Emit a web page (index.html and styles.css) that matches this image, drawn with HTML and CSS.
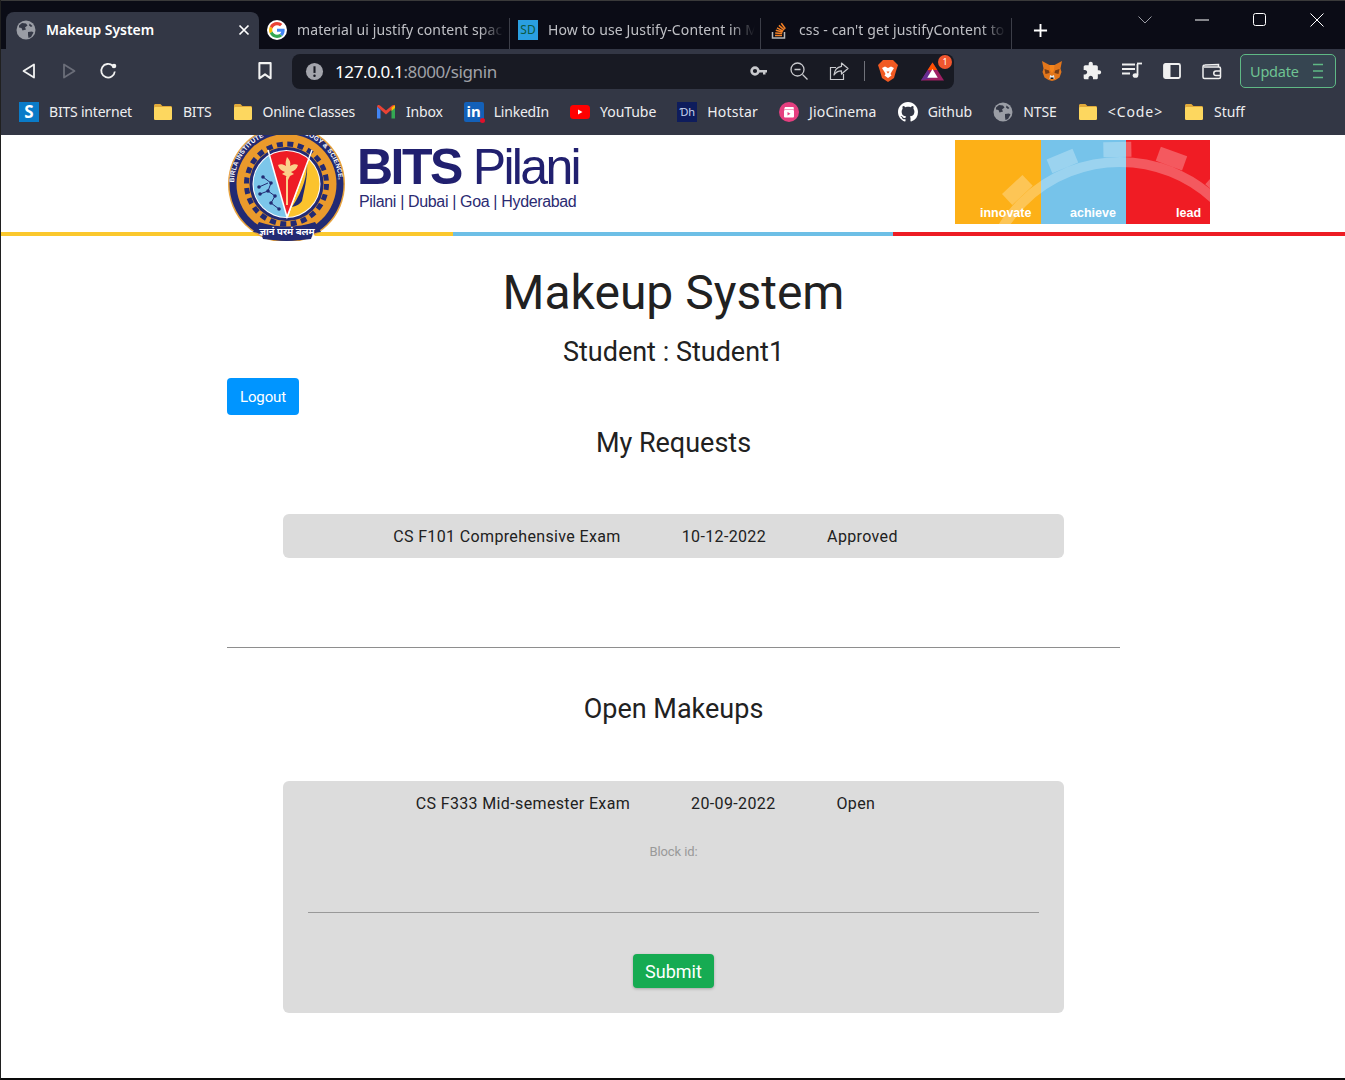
FILE: index.html
```html
<!DOCTYPE html>
<html lang="en">
<head>
<meta charset="utf-8">
<title>Makeup System</title>
<link rel="stylesheet" href="styles.css">
</head>
<body>
<svg class="defs" width="0" height="0" aria-hidden="true">
  <defs>
    <symbol id="globe" viewBox="0 0 20 20">
      <circle cx="10" cy="10" r="9.5" fill="#9a9da5"/>
      <path d="M3 5.500l3-2.500 4 .5 1.500 2-2.500 2 1 2-3.500 1-1-2.500L3 7.500zM12 12l4-.5 1.500 1-2.500 4.500-2.500 1-.5-3zM13.500 3.500l3 2.500-1.500 1-2-1.500z" fill="#343846"/>
    </symbol>
    <symbol id="folder" viewBox="0 0 20 20">
      <path d="M1 3.500C1 2.700 1.600 2 2.400 2h5l2 2h8.200c.8 0 1.400.6 1.400 1.400v11.200c0 .8-.6 1.400-1.400 1.400H2.400C1.600 18 1 17.400 1 16.600z" fill="#e0a93a"/>
      <path d="M1 6.500C1 5.700 1.600 5 2.400 5h15.200c.8 0 1.400.7 1.400 1.500v10.100c0 .8-.6 1.400-1.400 1.400H2.400C1.600 18 1 17.400 1 16.600z" fill="#fdd75f"/>
    </symbol>
  </defs>
</svg>
<div class="window">
  <div class="tabstrip">
    <div class="tab tab-active">
      <svg class="fav"><use href="#globe"/></svg>
      <span class="tab-title-active">Makeup System</span>
      <svg class="tab-close" viewBox="0 0 12 12"><path d="M1.500 1.500l9 9M10.500 1.500l-9 9" stroke="#fff" stroke-width="1.700"/></svg>
    </div>
    <div class="tab">
      <svg class="fav" viewBox="-6 -6 60 60">
        <circle cx="24" cy="24" r="30" fill="#fff"/>
        <path fill="#EA4335" d="M24 9.500c3.540 0 6.710 1.220 9.210 3.600l6.850-6.850C35.900 2.380 30.470 0 24 0 14.620 0 6.510 5.380 2.560 13.220l7.980 6.190C12.430 13.720 17.740 9.500 24 9.500z"/>
        <path fill="#4285F4" d="M46.980 24.550c0-1.570-.15-3.090-.38-4.550H24v9.020h12.940c-.58 2.960-2.260 5.480-4.780 7.180l7.730 6c4.510-4.180 7.090-10.360 7.090-17.650z"/>
        <path fill="#FBBC05" d="M10.530 28.590c-.48-1.450-.76-2.990-.76-4.590s.27-3.140.76-4.590l-7.980-6.190C.92 16.460 0 20.120 0 24c0 3.880.92 7.540 2.560 10.780l7.970-6.190z"/>
        <path fill="#34A853" d="M24 48c6.480 0 11.930-2.130 15.890-5.810l-7.730-6c-2.150 1.450-4.920 2.300-8.160 2.300-6.260 0-11.570-4.220-13.470-9.910l-7.980 6.190C6.510 42.620 14.620 48 24 48z"/>
      </svg>
      <span class="tab-title">material ui justify content space</span>
    </div>
    <div class="tab">
      <span class="fav-sd">SD</span>
      <span class="tab-title">How to use Justify-Content in M</span>
    </div>
    <div class="tab">
      <svg class="fav" viewBox="0 0 20 20">
        <path d="M3.500 12v6h12v-6" fill="none" stroke="#b8b8b8" stroke-width="1.500"/>
        <path d="M6 15.500h7" stroke="#f48024" stroke-width="1.500"/>
        <path d="M6.200 13l7 .6M6.800 10.300l6.800 1.800M8 7.800l6.200 3.300M9.900 5.400l5.300 4.500M12.300 3.200l4 5.600" stroke="#f48024" stroke-width="1.500"/>
      </svg>
      <span class="tab-title">css - can't get justifyContent to</span>
    </div>
    <svg class="new-tab" viewBox="0 0 16 16"><path d="M8 1v14M1 8h14" stroke="#fff" stroke-width="2"/></svg>
    <div class="win-controls">
      <svg class="win-icon" viewBox="0 0 14 14"><path d="M.5 3.500l6.500 6.500 6.500-6.500" fill="none" stroke="#9b9ca4"/></svg>
      <svg class="win-icon" viewBox="0 0 14 14"><path d="M0 7h14" stroke="#fff"/></svg>
      <svg class="win-icon" viewBox="0 0 14 14"><rect x=".5" y=".5" width="12" height="12" rx="2" fill="none" stroke="#fff"/></svg>
      <svg class="win-icon" viewBox="0 0 14 14"><path d="M.5.500l13 13M13.500.500l-13 13" stroke="#fff"/></svg>
    </div>
  </div>

  <div class="toolbar">
    <div class="nav-group">
      <svg class="nav-icon" viewBox="0 0 20 20"><path d="M15 3.500v13L4.500 10z" fill="none" stroke="#f2f2f2" stroke-width="1.800" stroke-linejoin="round"/></svg>
      <svg class="nav-icon" viewBox="0 0 20 20"><path d="M5 3.500v13L15.500 10z" fill="none" stroke="#6b6e79" stroke-width="1.800" stroke-linejoin="round"/></svg>
      <svg class="nav-icon" viewBox="0 0 20 20"><path d="M15.800 10.500a6.800 6.800 0 1 1-2-5.600" fill="none" stroke="#f2f2f2" stroke-width="1.800"/><circle cx="15" cy="5" r="2.300" fill="#f2f2f2"/></svg>
    </div>
    <svg class="bookmark-btn" viewBox="0 0 14 16"><path d="M2 1h10v13.500l-5-3.500-5 3.500z" fill="none" stroke="#f2f2f2" stroke-width="1.800" stroke-linejoin="round"/></svg>
    <div class="omnibox">
      <svg class="omni-warn" viewBox="0 0 20 20"><circle cx="10" cy="10" r="9" fill="#a3a5ac"/><path d="M10 4.500v7" stroke="#181a23" stroke-width="2.200"/><circle cx="10" cy="14.500" r="1.300" fill="#181a23"/></svg>
      <span class="url"><span class="url-host">127.0.0.1</span>:8000/signin</span>
      <div class="omni-actions">
        <svg class="omni-icon" viewBox="0 0 20 20"><circle cx="6" cy="10" r="3.400" fill="none" stroke="#c8c9cd" stroke-width="2.600"/><path d="M9 9h9v2.500h-1.500v2H14v-2H9z" fill="#c8c9cd"/></svg>
        <svg class="omni-icon" viewBox="0 0 20 20"><circle cx="8.500" cy="8.500" r="6.500" fill="none" stroke="#c8c9cd" stroke-width="1.300"/><path d="M5.500 8.500h6M13.500 13.500l5 5" stroke="#c8c9cd" stroke-width="1.300"/></svg>
        <svg class="omni-icon" viewBox="0 0 20 20"><path d="M7 6.500H1.500v12h13V13" fill="none" stroke="#c8c9cd" stroke-width="1.200"/><path d="M12.500 2l6.500 5.500-6.500 5.500V9.800C9.500 9.800 7 10.800 5 14c.5-5 3-8 7.500-8.700z" fill="none" stroke="#c8c9cd" stroke-width="1.200" stroke-linejoin="round"/></svg>
        <span class="omni-sep"></span>
        <svg class="brave" viewBox="0 0 20 24">
          <path d="M5 1h10l2.500 2.500L20 6l-1 3-1 3-2 7-6 4-6-4-2-7-1-3L0 6l2.500-2.500z" fill="#f15a22"/>
          <path d="M4 9l3-1.500L10 9l3-1.500L16 9l-2.500 4-1 2 1 1.500L10 19l-3.500-2.500 1-1.500-1-2z" fill="#fff"/>
          <path d="M8.500 12.500h3L10 14.500z" fill="#f15a22"/>
        </svg>
        <div class="bat">
          <svg class="bat-tri" viewBox="0 0 24 20">
            <path d="M12 1L0 20h24z" fill="#9e1f63"/>
            <path d="M12 1l5 8H7z" fill="#ff5000"/>
            <path d="M0 20l7-11 5 8z" fill="#662d91"/>
            <path d="M12 8l5.500 9h-11z" fill="#fff"/>
          </svg>
          <span class="bat-badge">1</span>
        </div>
      </div>
    </div>
    <div class="ext-group">
      <svg class="ext-icon ext-fox" viewBox="0 0 20 20">
        <path d="M0 0l7.500 4h5L20 0l-1.500 7.500 1 3.500-2 5.500-4 2.500-3.500 1-3.500-1-4-2.500-2-5.500 1-3.500z" fill="#e2761b"/>
        <path d="M2.500 8l4.500 1.500L7.500 12 3.500 13zM17.500 8L13 9.500 12.500 12l4 1z" fill="#763d16"/>
        <path d="M8 14l2 1 2-1 .5 4h-5z" fill="#e4ebf1"/>
        <path d="M8.500 16.500h3V18h-3z" fill="#161616"/>
        <path d="M7.500 4h5L12 9l-2 3-2-3z" fill="#f6851b"/>
      </svg>
      <svg class="ext-icon" viewBox="0 0 24 24"><path fill="#f0f0f0" d="M20.500 11H19V7c0-1.100-.9-2-2-2h-4V3.500C13 2.120 11.880 1 10.500 1S8 2.120 8 3.500V5H4c-1.100 0-1.990.9-1.990 2v3.800H3.500c1.490 0 2.700 1.210 2.700 2.700s-1.210 2.700-2.700 2.700H2V20c0 1.100.9 2 2 2h3.800v-1.500c0-1.490 1.210-2.700 2.700-2.700 1.490 0 2.700 1.210 2.700 2.700V22H17c1.100 0 2-.9 2-2v-4h1.500c1.380 0 2.500-1.120 2.500-2.500S21.880 11 20.500 11z"/></svg>
      <svg class="ext-icon" viewBox="0 0 20 20"><path d="M0 3.500h13M0 8h13M0 12.500h8" stroke="#f0f0f0" stroke-width="1.800"/><path d="M15.500 3v11" stroke="#f0f0f0" stroke-width="1.800"/><path d="M15 2.500h5" stroke="#f0f0f0" stroke-width="1.800"/><ellipse cx="13.500" cy="14.500" rx="2.800" ry="2.300" fill="#f0f0f0"/></svg>
      <svg class="ext-icon" viewBox="0 0 20 20"><rect x="2" y="3" width="16" height="14" rx="1.500" fill="none" stroke="#f0f0f0" stroke-width="1.800"/><path d="M2 3h6.500v14H2z" fill="#f0f0f0"/></svg>
      <svg class="ext-icon" viewBox="0 0 20 20"><path d="M16.500 6V3.500L3 4C1.800 4 1 5 1 6v10c0 .8.700 1.500 1.500 1.500H17c.8 0 1.500-.7 1.500-1.500V7.500C18.500 6.500 17.800 6 17 6H2" fill="none" stroke="#f0f0f0" stroke-width="1.500"/><path d="M19 10h-5a2 2 0 0 0 0 4.500h5" fill="none" stroke="#f0f0f0" stroke-width="1.500"/></svg>
    </div>
    <div class="update">
      <span>Update</span>
      <svg class="update-menu" viewBox="0 0 12 16"><path d="M1 1.500h10M1 8h10M1 14.500h10" stroke="#5fb985" stroke-width="1.500"/></svg>
    </div>
  </div>

  <div class="bookmarks">
    <div class="bm bm-tight"><span class="bm-square bm-s">S</span><span>BITS internet</span></div>
    <div class="bm bm-tight"><svg class="bm-icon"><use href="#folder"/></svg><span>BITS</span></div>
    <div class="bm bm-tight"><svg class="bm-icon"><use href="#folder"/></svg><span>Online Classes</span></div>
    <div class="bm bm-tight">
      <svg class="bm-icon" viewBox="0 0 20 20">
        <path d="M1 4.500v12h3.500V8z" fill="#4285f4"/>
        <path d="M19 4.500v12h-3.500V8z" fill="#34a853"/>
        <path d="M1 4.500C1 3 3 2.500 4 3.500l6 5 6-5c1-1 3-.5 3 1L10 12.500z" fill="#ea4335"/>
        <path d="M15.500 5.500L19 3v3l-3.500 3z" fill="#fbbc04"/>
      </svg>
      <span>Inbox</span>
    </div>
    <div class="bm bm-tight">
      <span class="bm-li-wrap"><span class="bm-square bm-li">in</span><span class="bm-li-dot"></span></span>
      <span>LinkedIn</span>
    </div>
    <div class="bm">
      <svg class="bm-icon" viewBox="0 0 20 20"><rect y="3" width="20" height="14" rx="3.500" fill="#f00"/><path d="M8 7.500v5l4.500-2.500z" fill="#fff"/></svg>
      <span>YouTube</span>
    </div>
    <div class="bm bm-wide"><span class="bm-square bm-hot">Ɗh</span><span>Hotstar</span></div>
    <div class="bm bm-wide">
      <svg class="bm-icon" viewBox="0 0 20 20"><circle cx="10" cy="10" r="10" fill="#e53f7f"/><rect x="5" y="8" width="10" height="7.500" rx="1" fill="#fff"/><path d="M5 7.500l1-2.500h8.500l.5 2.500z" fill="#fff"/><path d="M8.500 10v3.500l3-1.700z" fill="#e53f7f"/></svg>
      <span>JioCinema</span>
    </div>
    <div class="bm">
      <svg class="bm-icon" viewBox="0 0 16 16"><path fill="#fff" d="M8 0C3.580 0 0 3.580 0 8c0 3.540 2.290 6.530 5.470 7.590.4.070.55-.17.55-.38 0-.19-.01-.82-.01-1.490-2.010.37-2.530-.49-2.690-.94-.09-.23-.48-.94-.82-1.130-.28-.15-.68-.52-.01-.53.630-.01 1.080.58 1.230.82.720 1.210 1.870.87 2.330.66.070-.52.280-.87.510-1.070-1.780-.2-3.640-.89-3.640-3.950 0-.87.310-1.590.820-2.150-.08-.2-.36-1.020.08-2.120 0 0 .67-.21 2.200.82.640-.18 1.320-.27 2-.27.680 0 1.360.09 2 .27 1.530-1.040 2.200-.82 2.200-.82.440 1.100.160 1.920.080 2.120.510.560.820 1.270.820 2.150 0 3.070-1.870 3.750-3.650 3.950.290.250.540.730.540 1.480 0 1.070-.01 1.930-.01 2.200 0 .210.150.460.550.380A8.013 8.013 0 0016 8c0-4.420-3.580-8-8-8z"/></svg>
      <span>Github</span>
    </div>
    <div class="bm"><svg class="bm-icon"><use href="#globe"/></svg><span>NTSE</span></div>
    <div class="bm bm-code"><svg class="bm-icon"><use href="#folder"/></svg><span>&lt;Code&gt;</span></div>
    <div class="bm"><svg class="bm-icon"><use href="#folder"/></svg><span>Stuff</span></div>
  </div>

  <main class="page">
    <header class="brand">
      <div class="brand-left">
        <svg class="emblem" viewBox="0 0 118 106">
          <defs>
            <path id="ringtext" d="M 7 49 A 52.500 52.500 0 0 1 112 49"/>
            <clipPath id="inner"><circle cx="59.500" cy="49" r="33"/></clipPath>
          </defs>
          <circle cx="59.500" cy="49" r="58.500" fill="#e8a33d"/>
          <circle cx="59.500" cy="49" r="57" fill="#222a73"/>
          <text class="ring-text"><textPath href="#ringtext" startOffset="1%">BIRLA INSTITUTE OF TECHNOLOGY &amp; SCIENCE, PILANI</textPath></text>
          <circle cx="59.500" cy="49" r="50" fill="#ea9a2c"/>
          <circle cx="59.500" cy="49" r="40" fill="none" stroke="#222a73" stroke-width="5" stroke-dasharray="6 4.500"/>
          <circle cx="59.500" cy="49" r="37" fill="#222a73"/>
          <circle cx="59.500" cy="49" r="34" fill="#fff"/>
          <g clip-path="url(#inner)">
            <path d="M20 10h21l19 72H20z" fill="#7cc6ea"/>
            <path d="M41 15h44L60 82z" fill="#ee1c25"/>
            <path d="M85 15h15v70H60z" fill="#fbc32d"/>
          </g>
          <path d="M41 15L60 82L85 15" fill="none" stroke="#fff" stroke-width="1.500"/>
          <path d="M36 42l8 6-3 8 7 5-4 7 8 6M32 52l9-4M41 56l-8 3" fill="none" stroke="#222a73" stroke-width="1"/>
          <g fill="#222a73"><circle cx="36" cy="42" r="1.800"/><circle cx="44" cy="48" r="1.800"/><circle cx="41" cy="56" r="1.800"/><circle cx="48" cy="61" r="1.800"/><circle cx="44" cy="68" r="1.800"/><circle cx="52" cy="74" r="1.800"/><circle cx="32" cy="52" r="1.800"/><circle cx="33" cy="59" r="1.800"/></g>
          <path d="M60 22c3 3 4 6 3 9 3-2 6-2 8-1-1 4-4 6-7 7l3 2-4 2-2 4-2-4-4-2 3-2c-3-1-6-3-7-7 2-1 5-1 8 1-1-3 0-6 1-9z" fill="#fbd08a"/>
          <path d="M60 42v28" stroke="#fbd08a" stroke-width="2"/>
          <path d="M80 28c0 12-3 26-15 44 5-1 8-3 10-6 2-10 6-24 5-38z" fill="#222a73"/>
          <path d="M26 97l6-10c18 6 38 6 56 0l6 10-8 1-2 6c-16 2-32 2-48 0l-2-6z" fill="#222a73"/>
          <text class="ribbon-text" x="60" y="100" text-anchor="middle">ज्ञानं परमं बलम्</text>
        </svg>
        <div class="wordmark">
          <div class="wordmark-main"><span class="wordmark-bits">BITS</span> <span class="wordmark-pilani">Pilani</span></div>
          <div class="wordmark-sub">Pilani | Dubai | Goa | Hyderabad</div>
        </div>
      </div>
      <svg class="banner" viewBox="0 0 255 84">
        <rect width="86" height="84" fill="#fdb017"/>
        <rect x="86" width="85" height="84" fill="#76c3ea"/>
        <rect x="171" width="84" height="84" fill="#f01c24"/>
        <circle cx="165" cy="160" r="138" fill="none" stroke="#fff" stroke-opacity=".27" stroke-width="10"/>
        <g fill="#fff" fill-opacity=".27">
          <rect x="-14" y="-158" width="28" height="15" transform="translate(165 160) rotate(-43)"/>
          <rect x="-14" y="-158" width="28" height="15" transform="translate(165 160) rotate(-22.500)"/>
          <rect x="-14" y="-158" width="28" height="15" transform="translate(165 160) rotate(-1)"/>
          <rect x="-14" y="-158" width="28" height="15" transform="translate(165 160) rotate(20)"/>
          <rect x="-14" y="-158" width="28" height="15" transform="translate(165 160) rotate(42)"/>
        </g>
        <text class="banner-text" x="25" y="77">innovate</text>
        <text class="banner-text" x="115" y="77">achieve</text>
        <text class="banner-text" x="221" y="77">lead</text>
      </svg>
    </header>
    <div class="stripe"><span class="stripe-y"></span><span class="stripe-b"></span><span class="stripe-r"></span></div>

    <div class="content">
      <h1 class="title">Makeup System</h1>
      <h2 class="student">Student : Student1</h2>
      <button class="logout">Logout</button>
      <h2 class="section-a">My Requests</h2>
      <div class="card card-a">
        <div class="row row-a"><span>CS F101 Comprehensive Exam</span><span>10-12-2022</span><span>Approved</span></div>
      </div>
      <hr class="rule">
      <h2 class="section-b">Open Makeups</h2>
      <div class="card card-b">
        <div class="row row-b"><span>CS F333 Mid-semester Exam</span><span>20-09-2022</span><span>Open</span></div>
        <form class="block-form">
          <label class="block-label" for="block">Block id:</label>
          <input class="block-input" id="block" type="text">
          <button class="submit" type="button">Submit</button>
        </form>
      </div>
    </div>
  </main>
</div>
</body>
</html>
```
FILE: styles.css
```css
* { box-sizing: border-box; }
html, body { margin: 0; padding: 0; height: 100%; overflow: hidden; background: #fff; }
.defs { position: absolute; }
svg { display: block; flex: none; }

.window {
  height: 1080px;
  display: flex;
  flex-direction: column;
  border-left: 1px solid #202020;
  border-bottom: 2px solid #0a0a0a;
  font-family: "Noto Sans", sans-serif;
  overflow: hidden;
}

/* tab strip */
.tabstrip {
  height: 49px;
  flex: none;
  display: flex;
  align-items: flex-end;
  background: #0b0c16;
  border-top: 1px solid #3a3a3a;
  padding-left: 5px;
}
.tab {
  width: 251px;
  height: 37px;
  display: flex;
  align-items: center;
  gap: 10px;
  padding: 0 6px 2px 8px;
  position: relative;
  font-size: 14px;
  letter-spacing: .12px;
  color: #bfc0c5;
}
.tab:not(.tab-active)::after {
  content: "";
  position: absolute;
  right: 0;
  top: 6px;
  bottom: 0;
  width: 1px;
  background: #3c3e48;
}
.tab-active {
  width: 253px;
  background: #333745;
  border-radius: 8px 8px 0 0;
  color: #fff;
  font-weight: 600;
  letter-spacing: -.03px;
  padding-left: 10px;
}
.fav { width: 20px; height: 20px; }
.tab-title-active { flex: 1; white-space: nowrap; }
.tab-title {
  flex: 1;
  white-space: nowrap;
  overflow: hidden;
  -webkit-mask-image: linear-gradient(90deg, #000 88%, transparent 100%);
  mask-image: linear-gradient(90deg, #000 88%, transparent 100%);
}
.tab-close { width: 12px; height: 12px; margin-right: 3px; }
.fav-sd {
  width: 20px;
  height: 20px;
  flex: none;
  background: #2a9fe0;
  color: #0d5a42;
  font-size: 12px;
  line-height: 20px;
  text-align: center;
  letter-spacing: 0;
}
.new-tab { width: 15px; height: 15px; margin: 0 0 11px 21px; }
.win-controls {
  margin-left: auto;
  align-self: stretch;
  display: flex;
  align-items: center;
  padding: 0 21px 11px 0;
  gap: 43.500px;
}
.win-icon { width: 14px; height: 14px; }

/* toolbar */
.toolbar {
  height: 43px;
  flex: none;
  display: flex;
  align-items: center;
  background: #333745;
  padding: 1px 8px 0 18px;
}
.nav-group { display: flex; gap: 20px; }
.nav-icon { width: 20px; height: 20px; }
.bookmark-btn { width: 16px; height: 18px; margin-left: 138px; }
.omnibox {
  width: 662px;
  height: 35px;
  margin-left: 19px;
  display: flex;
  align-items: center;
  background: #181a23;
  border-radius: 8px;
  padding: 0 10px 0 13px;
}
.omni-warn { width: 19px; height: 19px; }
.url { margin-left: 11px; font-size: 17px; letter-spacing: -.4px; color: #a0a2a8; white-space: nowrap; }
.url-host { color: #fff; }
.omni-actions { margin-left: auto; display: flex; align-items: center; gap: 20px; }
.omni-icon { width: 20px; height: 20px; }
.omni-sep { width: 1px; height: 20px; background: #70727a; margin-left: -5px; margin-right: -7px; }
.brave { width: 20px; height: 24px; }
.bat { position: relative; width: 23px; height: 20px; margin-left: 3px; }
.bat-tri { width: 23px; height: 20px; }
.bat-badge {
  position: absolute;
  top: -6px;
  right: -8px;
  width: 14px;
  height: 14px;
  border-radius: 50%;
  background: #f0562e;
  color: #fff;
  font-size: 9px;
  line-height: 14px;
  text-align: center;
}
.ext-group { display: flex; gap: 20px; margin-left: 88px; }
.ext-icon { width: 20px; height: 20px; }
.update {
  width: 96px;
  height: 34px;
  margin-left: 18px;
  display: flex;
  align-items: center;
  justify-content: space-between;
  padding: 0 11px 0 9px;
  border: 1px solid #5fb985;
  border-radius: 5px;
  background: #364551;
  color: #6fc393;
  font-size: 14.500px;
  letter-spacing: -.2px;
}
.update-menu { width: 12px; height: 16px; }

/* bookmarks */
.bookmarks {
  height: 43px;
  flex: none;
  display: flex;
  align-items: center;
  gap: 21px;
  background: #333745;
  padding: 0 0 4px 18px;
  color: #eeeef0;
  font-size: 14px;
  letter-spacing: -.05px;
}
.bm { display: flex; align-items: center; gap: 10px; white-space: nowrap; }
.bm-tight { letter-spacing: -.2px; }
.bm-wide { letter-spacing: .2px; }
.bm-code { letter-spacing: .9px; }
.bm-icon { width: 20px; height: 20px; }
.bm-square {
  width: 20px;
  height: 20px;
  display: block;
  text-align: center;
  font-weight: 700;
  letter-spacing: 0;
}
.bm-s { background: #0a7bc8; color: #fff; font-size: 17px; line-height: 20px; }
.bm-li { background: #1360b8; color: #fff; font-size: 15px; line-height: 19px; border-radius: 2px; }
.bm-li-wrap { position: relative; display: block; width: 20px; height: 20px; }
.bm-li-dot {
  position: absolute;
  right: -1px;
  bottom: -1px;
  width: 5px;
  height: 5px;
  border-radius: 50%;
  background: #e0102a;
}
.bm-hot { background: #0e1c5c; color: #c8d2ee; font-size: 11px; line-height: 20px; font-weight: 400; }

/* page */
.page {
  flex: 1;
  background: #fff;
  font-family: Roboto, sans-serif;
  color: #212121;
  overflow: hidden;
}
.brand {
  height: 97px;
  display: flex;
  justify-content: space-between;
  padding: 0 135px 0 226px;
}
.brand-left { display: flex; align-items: flex-start; }
.emblem { width: 118px; height: 106px; position: relative; z-index: 1; }
.ring-text { font-family: "Liberation Sans", sans-serif; font-size: 6.500px; font-weight: 700; fill: #fff; letter-spacing: .15px; }
.ribbon-text { font-family: "Noto Sans", sans-serif; font-size: 9.500px; font-weight: 700; fill: #fff; }
.wordmark { margin-left: 12px; color: #21206f; font-family: "Liberation Sans", sans-serif; }
.wordmark-main { font-size: 50px; line-height: 52px; margin-top: 6px; white-space: nowrap; }
.wordmark-bits { font-weight: 700; letter-spacing: -2.500px; }
.wordmark-pilani { letter-spacing: -2.700px; margin-left: -2px; }
.wordmark-sub { font-size: 16px; line-height: 18px; margin-left: 2px; letter-spacing: -.35px; white-space: nowrap; color: #2b2b72; }
.banner { width: 255px; height: 84px; margin-top: 5px; }
.banner-text { font-family: "Liberation Sans", sans-serif; font-size: 12.500px; font-weight: 700; fill: #fff; }

.stripe { height: 4px; display: flex; }
.stripe-y { width: 452px; background: #fbc82d; }
.stripe-b { width: 440px; background: #6dbfe6; }
.stripe-r { flex: 1; background: #ed1c24; }

.content {
  width: 893px;
  margin-left: 226px;
  display: flex;
  flex-direction: column;
  align-items: stretch;
}
.title { margin: 28px 0 0; font-size: 48px; line-height: 58px; font-weight: 400; text-align: center; }
.student { margin: 13px 0 0; font-size: 27px; line-height: 34px; font-weight: 400; text-align: center; }
.logout {
  width: 72px;
  height: 37px;
  margin-top: 9px;
  border: 0;
  border-radius: 4px;
  background: #0095ff;
  color: #fff;
  font-family: Roboto, sans-serif;
  font-size: 15px;
  letter-spacing: -.1px;
  padding: 0;
}
.section-a, .section-b { margin: 0; font-size: 27px; line-height: 34px; font-weight: 400; text-align: center; }
.section-a { margin-top: 11px; }
.card { width: 781px; margin-left: 56px; background: #dcdcdc; border-radius: 6px; }
.card-a { height: 44px; margin-top: 54px; }
.row {
  height: 44px;
  display: flex;
  align-items: center;
  justify-content: center;
  gap: 61px;
  padding-right: 56px;
  font-size: 16px;
  letter-spacing: .36px;
  color: #212121;
}
.rule { width: 100%; margin: 89px 0 0; border: 0; border-top: 1px solid #8e8e8e; }
.section-b { margin-top: 44px; }
.card-b { height: 232px; margin-top: 55px; }
.block-form { display: flex; flex-direction: column; align-items: center; padding: 0 25px; }
.block-label { margin-top: 19px; font-size: 13px; line-height: 16px; color: #999; letter-spacing: -.1px; }
.block-input {
  width: 100%;
  height: 53px;
  border: 0;
  border-bottom: 1px solid #999;
  background: transparent;
  outline: 0;
}
.submit {
  width: 81px;
  height: 34px;
  margin-top: 41px;
  border: 0;
  border-radius: 4px;
  background: #16ab52;
  color: #fff;
  font-family: Roboto, sans-serif;
  font-size: 18px;
  padding: 0;
  box-shadow: 0 1px 3px rgba(0, 0, 0, .25);
}
```
